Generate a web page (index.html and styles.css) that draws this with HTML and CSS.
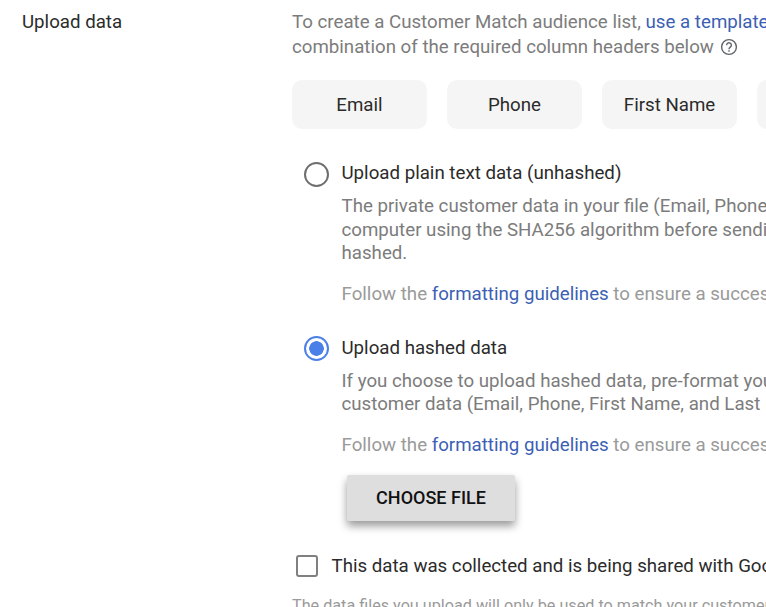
FILE: index.html
```html
<!DOCTYPE html>
<html lang="en">
<head>
    <meta charset="UTF-8">
    <title>Upload data</title>
    <link rel="stylesheet" href="styles.css">
</head>
<body>
    <div class="section">
        <div class="section-label">Upload data</div>
        <div class="section-body">
            <p class="intro">To create a Customer Match audience list, <a href="#">use a template</a> or create a file with any<br>
                combination of the required column headers below
                <svg class="help" viewBox="0 0 18 18" width="18" height="18">
                    <circle cx="9" cy="9" r="7.4" fill="none" stroke="#5f6368" stroke-width="1.4"/>
                    <path d="M6.6 7.2a2.4 2.4 0 1 1 3.7 2c-.9.6-1.3 1-1.3 2" fill="none" stroke="#5f6368" stroke-width="1.4"/>
                    <rect x="8.3" y="12.2" width="1.4" height="1.5" fill="#5f6368"/>
                </svg>
            </p>

            <div class="chips">
                <div class="chip">Email</div>
                <div class="chip">Phone</div>
                <div class="chip">First Name</div>
                <div class="chip">Last Name</div>
            </div>

            <div class="option">
                <span class="radio"></span>
                <div class="option-text">
                    <div class="option-title">Upload plain text data (unhashed)</div>
                    <p class="desc">The private customer data in your file (Email, Phone, First Name, and Last Name) will be hashed on your<br>
                        computer using the SHA256 algorithm before sending it to Google. Only the<br>
                        hashed.</p>
                    <p class="follow">Follow the <a href="#">formatting guidelines</a> to ensure a successful upload.</p>
                </div>
            </div>

            <div class="option option-second">
                <span class="radio radio-on"></span>
                <div class="option-text">
                    <div class="option-title">Upload hashed data</div>
                    <p class="desc">If you choose to upload hashed data, pre-format your file using SHA256 and hash the<br>
                        customer data (Email, Phone, First Name, and Last Name) before uploading it.</p>
                    <p class="follow">Follow the <a href="#">formatting guidelines</a> to ensure a successful upload.</p>
                </div>
            </div>

            <button class="choose">CHOOSE FILE</button>

            <div class="consent">
                <span class="checkbox"></span>
                <span>This data was collected and is being shared with Google in accordance with our policies</span>
            </div>

            <p class="note">The data files you upload will only be used to match your customers and will be deleted afterwards</p>
        </div>
    </div>
</body>
</html>
```

FILE: styles.css
```css
html {
    font-family: Roboto, sans-serif;
}

body {
    margin: 0;
    height: 607px;
    overflow: hidden;
    background-color: #fff;
    color: #2b2b2b;
    font-size: 18.7px;
    white-space: nowrap;
}

a {
    color: #3c5fb4;
    text-decoration: none;
}

p {
    margin: 0;
}

.section {
    display: flex;
    padding: 10px 0 0 22px;
}

.section-label {
    width: 270px;
    flex-shrink: 0;
    line-height: 25px;
}

.section-body {
    min-width: 0;
}

.intro {
    color: #7c7c7c;
    line-height: 25px;
}

.help {
    margin-left: 2px;
    vertical-align: -3px;
}

.chips {
    display: flex;
    gap: 20px;
    margin-top: 20px;
}

.chip {
    width: 135px;
    height: 49px;
    flex-shrink: 0;
    line-height: 50px;
    text-align: center;
    background-color: #f5f5f5;
    border-radius: 10px;
}

.option {
    display: flex;
    margin: 32px 0 0 12px;
}

.option-second {
    margin-top: 30px;
}

.radio {
    box-sizing: border-box;
    width: 25px;
    height: 25px;
    flex-shrink: 0;
    margin: 1px 12.5px 0 0;
    border: 2.5px solid #6f6f6f;
    border-radius: 50%;
}

.radio-on {
    margin-top: 0;
    border-color: #4a80e8;
    background: radial-gradient(circle, #4a80e8 0 7px, #fff 7.5px);
}

.option-title {
    line-height: 25px;
}

.desc {
    margin-top: 9px;
    color: #7c7c7c;
    line-height: 23.5px;
}

.follow {
    margin-top: 16px;
    color: #9a9a9a;
    line-height: 24px;
}

.choose {
    display: block;
    width: 168px;
    height: 46px;
    margin: 18px 0 0 55px;
    padding: 0;
    border: none;
    border-radius: 2px;
    background-color: #dedede;
    color: #111;
    font-family: Roboto, sans-serif;
    font-size: 18px;
    font-weight: 500;
    box-shadow: 0 5px 8px rgba(0, 0, 0, 0.4);
}

.consent {
    display: flex;
    align-items: center;
    gap: 13.5px;
    margin: 34px 0 0 4px;
}

.checkbox {
    box-sizing: border-box;
    width: 22px;
    height: 22px;
    flex-shrink: 0;
    border: 2px solid #808080;
    border-radius: 3px;
}

.note {
    margin-top: 19px;
    color: #9a9a9a;
    font-size: 16.2px;
    line-height: 20px;
}
```
